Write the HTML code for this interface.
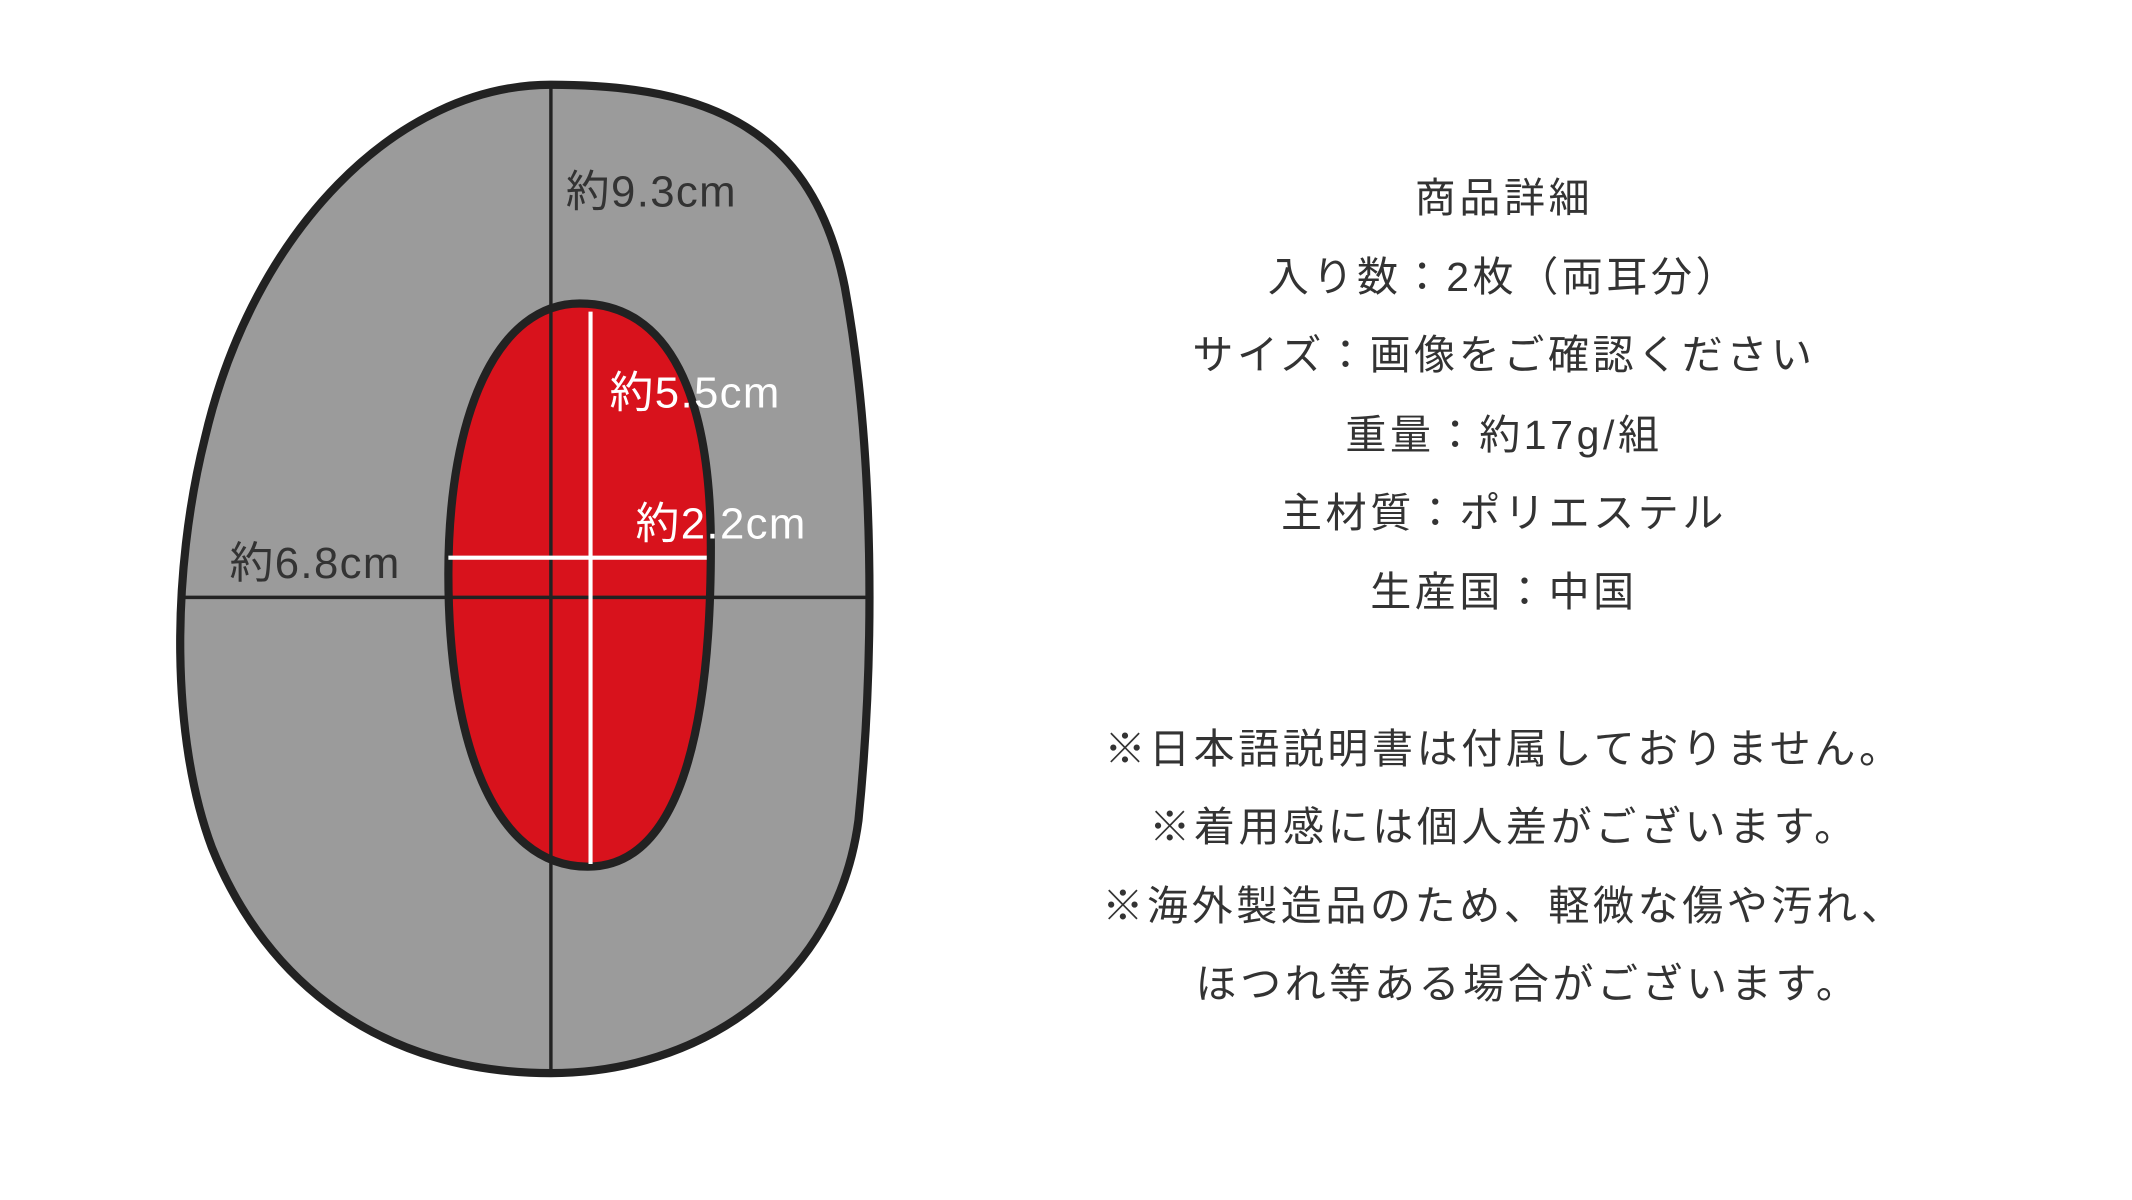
<!DOCTYPE html>
<html><head><meta charset="utf-8"><style>
html,body{margin:0;padding:0;background:#fff;}
body{width:2132px;height:1200px;position:relative;overflow:hidden;font-family:"Liberation Sans","Noto Sans CJK JP",sans-serif;}
svg{position:absolute;left:0;top:0;}
.t{position:absolute;left:904px;width:1200px;text-align:center;color:#333;font-size:41px;line-height:50px;letter-spacing:3.6px;white-space:nowrap;}
</style></head><body>
<svg width="2132" height="1200" viewBox="0 0 2132 1200">
<g transform="scale(1.367)">
<path d="M403 62 C520 62,595 95,618 210 C640 330,640 480,628 600 C612 720,510 785,403 785 C280 785,195 720,155 620 C125 540,125 420,150 320 C185 170,290 62,403 62 Z" fill="#9b9b9b" stroke="#222" stroke-width="6"/>
<line x1="403" y1="64" x2="403" y2="783" stroke="#222" stroke-width="2.5"/>
<line x1="132" y1="437" x2="636" y2="437" stroke="#222" stroke-width="2.5"/>
<path d="M424 222 C490 222,520 290,520 400 C520 540,495 634,430 634 C360 634,328 540,328 420 C328 300,365 222,424 222 Z" fill="#d8121c" stroke="#222" stroke-width="6"/>
<line x1="403" y1="225" x2="403" y2="631" stroke="#222" stroke-width="2.5"/>
<line x1="331" y1="437" x2="517" y2="437" stroke="#222" stroke-width="2.5"/>
<line x1="432" y1="228" x2="432" y2="632" stroke="#fff" stroke-width="3"/>
<line x1="328" y1="408" x2="517" y2="408" stroke="#fff" stroke-width="3"/>
<g font-family="Liberation Sans, Noto Sans CJK JP, sans-serif" font-size="32" letter-spacing="1">
<text x="414" y="151" fill="#333">約9.3cm</text>
<text x="446" y="298" fill="#fff">約5.5cm</text>
<text x="465" y="394" fill="#fff">約2.2cm</text>
<text x="168" y="423" fill="#333">約6.8cm</text>
</g>
</g>
</svg>
<div class="t" style="top:173px">商品詳細</div>
<div class="t" style="top:252px">入り数：2枚（両耳分）</div>
<div class="t" style="top:330px">サイズ：画像をご確認ください</div>
<div class="t" style="top:410px">重量：約17g/組</div>
<div class="t" style="top:488px">主材質：ポリエステル</div>
<div class="t" style="top:567px">生産国：中国</div>
<div class="t" style="top:724px">※日本語説明書は付属しておりません。</div>
<div class="t" style="top:802px">※着用感には個人差がございます。</div>
<div class="t" style="top:881px">※海外製造品のため、軽微な傷や汚れ、</div>
<div class="t" style="top:959px;left:928px">ほつれ等ある場合がございます。</div>
</body></html>
